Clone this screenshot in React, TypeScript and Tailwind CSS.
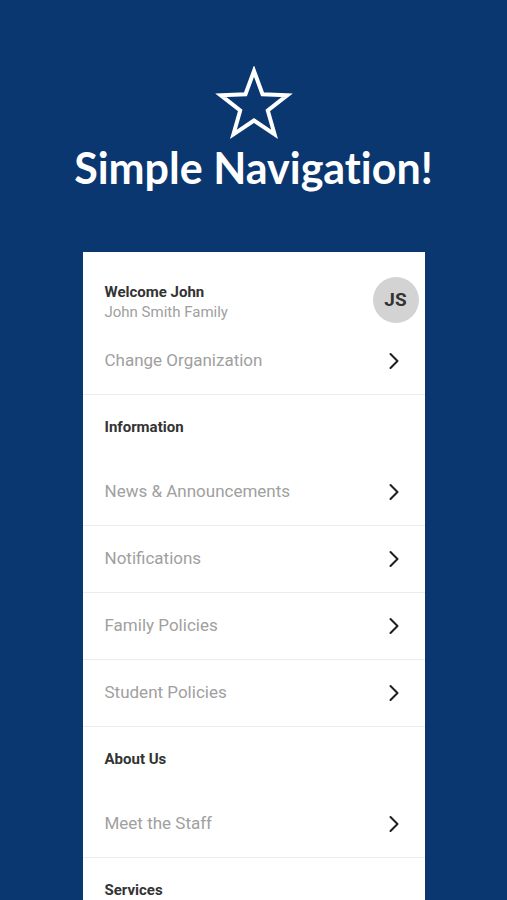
import { ChevronRight } from "lucide-react";

type Item =
  | { kind: "section"; label: string }
  | { kind: "link"; label: string };

const items: Item[] = [
  { kind: "section", label: "Information" },
  { kind: "link", label: "News & Announcements" },
  { kind: "link", label: "Notifications" },
  { kind: "link", label: "Family Policies" },
  { kind: "link", label: "Student Policies" },
  { kind: "section", label: "About Us" },
  { kind: "link", label: "Meet the Staff" },
  { kind: "section", label: "Services" },
];

function Star() {
  return (
    <svg width="80" height="76" viewBox="0 0 80 76" fill="none">
      <polygon
        points="40,5 48.52,28.27 73.29,29.18 53.79,44.48 60.57,68.32 40,54.5 19.43,68.32 26.21,44.48 6.71,29.18 31.48,28.27"
        stroke="white"
        strokeWidth="4"
        strokeLinejoin="miter"
      />
    </svg>
  );
}

function LinkRow({ label }: { label: string }) {
  return (
    <div className="flex h-[67px] items-center justify-between border-b border-[#ececec] pl-[22px] pr-[17px]">
      <span className="text-[17px] text-[#a0a0a0]">{label}</span>
      <ChevronRight size={28} strokeWidth={1.75} className="text-[#1f1f1f]" />
    </div>
  );
}

function SectionRow({ label }: { label: string }) {
  return (
    <div className="flex h-[64px] items-center pl-[22px]">
      <span className="text-[15px] font-bold text-[#333333]">{label}</span>
    </div>
  );
}

export default function App() {
  return (
    <div
      className="flex h-[900px] flex-col items-center overflow-hidden bg-[#0a3770]"
      style={{ fontFamily: "Roboto, 'Noto Sans', sans-serif" }}
    >
      <div className="mt-[66px]">
        <Star />
      </div>
      <h1
        className="mt-[2px] text-[43px] font-bold leading-[48px] text-white [font-variant-ligatures:none]"
        style={{ fontFamily: "Lato, 'Open Sans', sans-serif" }}
      >
        Simple Navigation!
      </h1>

      <div className="mt-[60px] w-[342px] shrink-0 bg-white">
        <div className="flex justify-between pt-[25px] pl-[22px] pr-[6px]">
          <div className="pt-[5px]">
            <div className="text-[15px] font-bold leading-5 text-[#333333]">
              Welcome John
            </div>
            <div className="text-[15px] leading-5 text-[#a0a0a0]">
              John Smith Family
            </div>
          </div>
          <div className="flex h-[46px] w-[46px] items-center justify-center rounded-full bg-[#d3d3d3] text-[19px] font-bold text-[#333333]">
            JS
          </div>
        </div>
        <div className="mt-[5px]">
          <LinkRow label="Change Organization" />
        </div>
        {items.map((item) =>
          item.kind === "section" ? (
            <SectionRow key={item.label} label={item.label} />
          ) : (
            <LinkRow key={item.label} label={item.label} />
          ),
        )}
      </div>
    </div>
  );
}
